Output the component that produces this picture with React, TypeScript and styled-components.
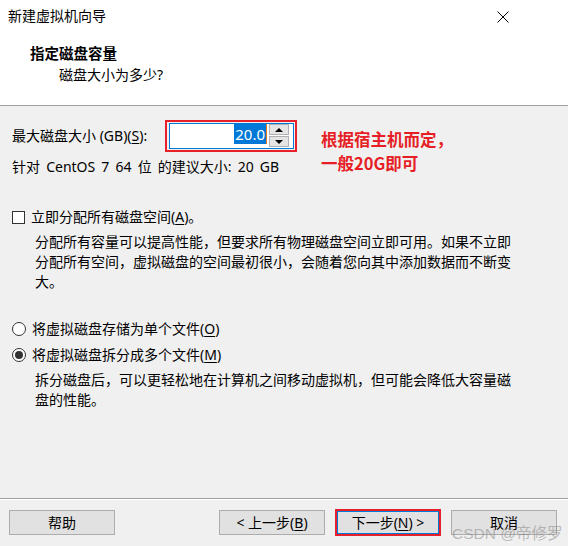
import React from "react";
import styled, { createGlobalStyle } from "styled-components";

const Global = createGlobalStyle`
  html, body { margin: 0; padding: 0; background: #f0f0f0; }
  body {
    font-family: "Noto Sans", "Noto Sans CJK SC", sans-serif;
    font-size: 14px;
    color: #000;
  }
`;

const Window = styled.div`
  position: relative;
  width: 568px;
  height: 546px;
  background: #f0f0f0;
  display: flex;
  flex-direction: column;
  overflow: hidden;
`;

const Header = styled.div`
  height: 105px;
  background: #fff;
  border-bottom: 1px solid #a0a0a0;
  display: flex;
  flex-direction: column;
`;

const TitleBar = styled.div`
  height: 32px;
  display: flex;
  align-items: center;
  justify-content: space-between;
  padding: 0 59px 0 8px;
  font-size: 14px;
  line-height: 20px;
`;

const CloseIcon = styled.svg`
  width: 12px;
  height: 12px;
  margin-top: 1px;
`;

const Heading = styled.div`
  margin: 11px 0 0 30px;
  font-weight: 700;
  font-size: 14.5px;
  line-height: 20px;
`;

const SubHeading = styled.div`
  margin: 2px 0 0 59px;
  line-height: 20px;
`;

const Body = styled.div`
  flex: 1;
  padding: 0 12px;
  display: flex;
  flex-direction: column;
`;

const SizeRow = styled.div`
  margin-top: 14px;
  display: flex;
  align-items: center;
  height: 32px;
  gap: 3px;
`;

const Label = styled.span`
  min-width: 150px;
  line-height: 20px;
  white-space: nowrap;
`;

const Key = styled.span`
  text-decoration: underline;
  text-underline-offset: 2px;
`;

const RedFrame = styled.div`
  border: 2px solid #e8202a;
  padding: 1px 1px 1px 2px;
  display: flex;
`;

const Spin = styled.div`
  width: 123px;
  height: 24px;
  border: 1px solid #0078d7;
  background: #fff;
  display: flex;
`;

const Field = styled.div`
  width: 98px;
  display: flex;
  justify-content: flex-end;
  align-items: flex-start;
  padding-right: 1px;
  box-sizing: border-box;
`;

const Selected = styled.span`
  background: #0078d7;
  color: #fff;
  line-height: 20px;
  padding: 0 1px;
  font-size: 15px;
  border-right: 1px solid #e07a1a;
`;

const SpinButtons = styled.div`
  margin-left: 1px;
  width: 20px;
  display: flex;
  flex-direction: column;
  gap: 1px;
`;

const SpinButton = styled.div`
  height: 11px;
  box-sizing: border-box;
  background: #e5e5e5;
  border: 1px solid #b0b0b0;
  display: flex;
  align-items: center;
  justify-content: center;
`;

const Arrow = styled.div<{ $up?: boolean }>`
  width: 0;
  height: 0;
  border-left: 4px solid transparent;
  border-right: 4px solid transparent;
  ${(p) =>
    p.$up ? "border-bottom: 4px solid #000;" : "border-top: 4px solid #000;"}
`;

const Annotation = styled.div`
  position: absolute;
  left: 321px;
  top: 127px;
  font-family: "Noto Sans CJK SC", sans-serif;
  color: #e61e25;
  font-weight: 700;
  font-size: 16.5px;
  line-height: 24px;
`;

const Line = styled.div<{ $top: number }>`
  margin-top: ${(p) => p.$top}px;
  line-height: 20px;
  word-spacing: 2.5px;
  white-space: nowrap;
`;

const OptionRow = styled.label<{ $top: number }>`
  margin-top: ${(p) => p.$top}px;
  display: flex;
  align-items: center;
  gap: 6px;
  line-height: 20px;
  white-space: nowrap;
`;

const CheckBox = styled.span`
  width: 13px;
  height: 13px;
  box-sizing: border-box;
  border: 1px solid #333;
  background: #fff;
`;

const Radio = styled.span<{ $on?: boolean }>`
  width: 14px;
  height: 14px;
  box-sizing: border-box;
  border: 1px solid #333;
  border-radius: 50%;
  background: #fff;
  display: flex;
  align-items: center;
  justify-content: center;
  &::after {
    content: "";
    width: 8px;
    height: 8px;
    border-radius: 50%;
    background: ${(p) => (p.$on ? "#333" : "transparent")};
  }
`;

const Para = styled.div<{ $top: number }>`
  margin: ${(p) => p.$top}px 0 0 23px;
  line-height: 20px;
  white-space: pre-line;
`;

const Footer = styled.div`
  height: 48px;
  box-sizing: border-box;
  border-top: 1px solid #a0a0a0;
  box-shadow: inset 0 1px 0 #fff;
  padding: 11px 11px 0 9px;
  display: flex;
  align-items: flex-start;
`;

const Button = styled.div`
  width: 106px;
  height: 25px;
  box-sizing: border-box;
  background: #e1e1e1;
  border: 1px solid #adadad;
  display: flex;
  align-items: center;
  justify-content: center;
  line-height: 20px;
  white-space: nowrap;
`;

const DefaultButton = styled(Button)`
  width: 102px;
  height: 23px;
  border-color: #0078d7;
`;

const NavGroup = styled.div`
  margin-left: auto;
  display: flex;
  gap: 10px;
`;

const RedMark = styled.div`
  border: 2px solid #e8202a;
  margin-top: -1px;
`;

const Watermark = styled.div`
  position: absolute;
  left: 452px;
  top: 523px;
  font-family: "Liberation Sans", "Noto Sans CJK SC", sans-serif;
  font-size: 15.5px;
  line-height: 22px;
  color: rgba(130, 130, 130, 0.5);
  pointer-events: none;
  white-space: nowrap;
`;

export default function App() {
  return (
    <>
      <Global />
      <Window>
        <Header>
          <TitleBar>
            <span>新建虚拟机向导</span>
            <CloseIcon viewBox="0 0 12 12">
              <path d="M0.5 0.5 L11.5 11.5 M11.5 0.5 L0.5 11.5" stroke="#000" strokeWidth="1" fill="none" />
            </CloseIcon>
          </TitleBar>
          <Heading>指定磁盘容量</Heading>
          <SubHeading>磁盘大小为多少?</SubHeading>
        </Header>
        <Body>
          <SizeRow>
            <Label>
              最大磁盘大小 (GB)(<Key>S</Key>):
            </Label>
            <RedFrame>
              <Spin>
                <Field>
                  <Selected>20.0</Selected>
                </Field>
                <SpinButtons>
                  <SpinButton>
                    <Arrow $up />
                  </SpinButton>
                  <SpinButton>
                    <Arrow />
                  </SpinButton>
                </SpinButtons>
              </Spin>
            </RedFrame>
          </SizeRow>
          <Line $top={5}>针对 CentOS 7 64 位 的建议大小: 20 GB</Line>
          <OptionRow $top={30}>
            <CheckBox />
            <span>
              立即分配所有磁盘空间(<Key>A</Key>)。
            </span>
          </OptionRow>
          <Para $top={5}>
            {"分配所有容量可以提高性能，但要求所有物理磁盘空间立即可用。如果不立即\n分配所有空间，虚拟磁盘的空间最初很小，会随着您向其中添加数据而不断变\n大。"}
          </Para>
          <OptionRow $top={27}>
            <Radio />
            <span>
              将虚拟磁盘存储为单个文件(<Key>O</Key>)
            </span>
          </OptionRow>
          <OptionRow $top={6}>
            <Radio $on />
            <span>
              将虚拟磁盘拆分成多个文件(<Key>M</Key>)
            </span>
          </OptionRow>
          <Para $top={5}>
            {"拆分磁盘后，可以更轻松地在计算机之间移动虚拟机，但可能会降低大容量磁\n盘的性能。"}
          </Para>
        </Body>
        <Footer>
          <Button>帮助</Button>
          <NavGroup>
            <Button>
              &lt; 上一步(<Key>B</Key>)
            </Button>
            <RedMark>
              <DefaultButton>
                下一步(<Key>N</Key>) &gt;
              </DefaultButton>
            </RedMark>
            <Button>取消</Button>
          </NavGroup>
        </Footer>
        <Annotation>
          根据宿主机而定，
          <br />
          一般20G即可
        </Annotation>
        <Watermark>CSDN @帝修罗</Watermark>
      </Window>
    </>
  );
}
